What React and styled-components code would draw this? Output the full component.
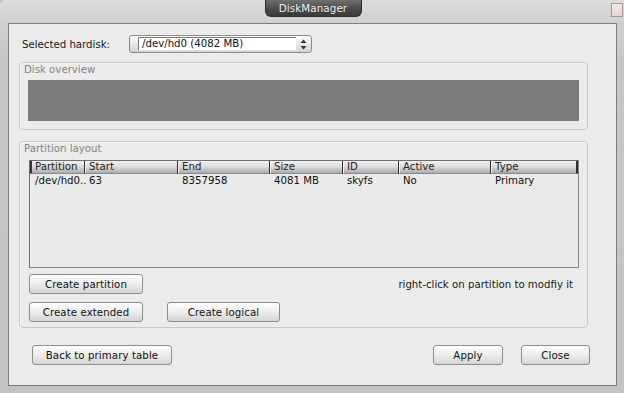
import React from "react";
import styled, { createGlobalStyle } from "styled-components";

const GlobalStyle = createGlobalStyle`
  html, body { margin: 0; padding: 0; }
  body {
    background: #c4c4c4;
    font-family: "DejaVu Sans", "Liberation Sans", sans-serif;
    font-size: 10.2px;
    color: #151515;
  }
`;

const Window = styled.div`
  width: 624px;
  height: 393px;
  display: flex;
  flex-direction: column;
  background: linear-gradient(#dcdcdc 0px, #d0d0d0 22px, #c6c6c6 60px, #c3c3c3);
  border-top-left-radius: 5px;
  overflow: hidden;
`;

const TitleBar = styled.div`
  height: 23px;
  flex: none;
  display: grid;
  grid-template-columns: 1fr 97px 1fr;
  padding: 0 1px 0 3px;
  align-items: start;
`;

const TitleTab = styled.div`
  grid-column: 2;
  height: 17px;
  box-sizing: border-box;
  background: linear-gradient(#707070, #4a4a4a 55%, #3a3a3a);
  border: 1px solid #2c2c2c;
  border-top: none;
  border-radius: 0 0 6px 6px;
  color: #ececec;
  font-size: 10.3px;
  display: flex;
  align-items: center;
  justify-content: center;
  padding-bottom: 1px;
  letter-spacing: 0.1px;
`;

const CloseBox = styled.div`
  grid-column: 3;
  justify-self: end;
  margin-top: 3px;
  width: 12px;
  height: 14px;
  box-sizing: border-box;
  border: 1px solid #a69393;
  background: linear-gradient(#f6e6e6, #e8d2d2);
`;

const Frame = styled.div`
  flex: 1;
  display: flex;
  padding: 0 7px 7px 8px;
  min-height: 0;
`;

const Panel = styled.div`
  flex: 1;
  display: flex;
  flex-direction: column;
  border: 1px solid #7e7e7e;
  background: #ebebeb;
`;

const HardiskRow = styled.div`
  display: flex;
  align-items: center;
  height: 18px;
  margin: 11px 0 0 13px;
`;

const Label = styled.div`
  width: 107px;
  color: #1a1a1a;
`;

const Select = styled.div`
  width: 183px;
  height: 18px;
  box-sizing: border-box;
  border: 1px solid #8c8c8c;
  border-radius: 3px;
  background: linear-gradient(#fdfdfd, #e6e6e6 55%, #d3d3d3);
  display: flex;
  align-items: center;
`;

const SelectField = styled.div`
  margin-left: 8px;
  width: 158px;
  height: 14px;
  box-sizing: border-box;
  background: #ffffff;
  border-top: 1px solid #7a7a7a;
  border-left: 1px solid #7a7a7a;
  border-bottom: 1px solid #e0e0e0;
  padding-left: 3px;
  line-height: 12px;
  color: #111;
  white-space: nowrap;
`;

const SelectArrow = styled.div`
  flex: 1;
  display: flex;
  align-items: center;
  justify-content: center;
`;

const Group = styled.div`
  margin: ${(p) => p.$top}px 28px 0 10px;
  border: 1px solid #c8c8c8;
  border-radius: 4px;
  box-shadow: inset 1px 1px 0 #f8f8f8;
  padding: 0 8px ${(p) => p.$bottom}px 9px;
  display: flex;
  flex-direction: column;
`;

const GroupLabel = styled.div`
  height: 13px;
  line-height: 13px;
  margin-left: -5px;
  margin-bottom: ${(p) => p.$gap}px;
  color: #858585;
`;

const OverviewBar = styled.div`
  height: 41px;
  margin-left: -1px;
  background: #7b7b7b;
`;

const Table = styled.div`
  height: 108px;
  box-sizing: border-box;
  border: 1px solid #8a8a8a;
  border-top-color: #6e6e6e;
  border-left-color: #6e6e6e;
  background: #eaeaea;
  display: grid;
  grid-template-columns: 54px 93px 92px 73px 56px 92px 88px;
  grid-auto-rows: 13px;
  align-content: start;
`;

const HeadCell = styled.div`
  box-sizing: border-box;
  height: 13px;
  line-height: 12px;
  padding-left: 4px;
  background: linear-gradient(#f2f2f2, #d9d9d9 50%, #acacac);
  border-left: 1px solid #2e2e2e;
  border-bottom: 1px solid #8a8a8a;
  border-right: ${(p) => (p.$last ? "2px solid #2e2e2e" : "none")};
  box-shadow: ${(p) => (p.$first ? "inset 1px 0 0 #3a3a3a" : "inset 1px 0 0 #f4f4f4")};
  color: #222;
  white-space: nowrap;
  overflow: hidden;
`;

const Cell = styled.div`
  line-height: 13px;
  padding-left: 5px;
  color: #111;
  white-space: nowrap;
  overflow: visible;
`;

const ButtonRow = styled.div`
  display: flex;
  align-items: center;
  gap: 24px;
  margin-top: ${(p) => p.$top}px;
`;

const Hint = styled.div`
  margin-left: auto;
  margin-right: 6px;
  color: #1a1a1a;
`;

const Button = styled.button`
  width: ${(p) => p.$w}px;
  height: 20px;
  box-sizing: border-box;
  padding: 0;
  border: 1px solid #8e8e8e;
  border-radius: 3px;
  background: linear-gradient(#fefefe, #ececec 50%, #d4d4d4);
  font-family: inherit;
  font-size: 10.2px;
  color: #111;
  letter-spacing: 0.1px;
`;

const BottomRow = styled.div`
  display: flex;
  align-items: center;
  margin: 17px 26px 0 23px;
`;

const RightButtons = styled.div`
  margin-left: auto;
  display: flex;
  gap: 18px;
`;

const columns = ["Partition", "Start", "End", "Size", "ID", "Active", "Type"];
const rows = [["/dev/hd0..", "63", "8357958", "4081 MB", "skyfs", "No", "Primary"]];

function UpDown() {
  return (
    <svg width="7" height="11" viewBox="0 0 7 11">
      <path d="M3.5 0.5 L6.5 4 L0.5 4 Z" fill="#333" />
      <path d="M3.5 10.5 L6.5 7 L0.5 7 Z" fill="#333" />
    </svg>
  );
}

export default function App() {
  return (
    <>
      <GlobalStyle />
      <Window>
        <TitleBar>
          <TitleTab>DiskManager</TitleTab>
          <CloseBox />
        </TitleBar>
        <Frame>
          <Panel>
            <HardiskRow>
              <Label>Selected hardisk:</Label>
              <Select>
                <SelectField>/dev/hd0 (4082 MB)</SelectField>
                <SelectArrow>
                  <UpDown />
                </SelectArrow>
              </Select>
            </HardiskRow>

            <Group $top={9} $bottom={8}>
              <GroupLabel $gap={4}>Disk overview</GroupLabel>
              <OverviewBar />
            </Group>

            <Group $top={11} $bottom={5}>
              <GroupLabel $gap={5}>Partition layout</GroupLabel>
              <Table>
                {columns.map((c, i) => (
                  <HeadCell key={c} $first={i === 0} $last={i === columns.length - 1}>
                    {c}
                  </HeadCell>
                ))}
                {rows.map((r) => r.map((v, i) => <Cell key={i}>{v}</Cell>))}
              </Table>
              <ButtonRow $top={6}>
                <Button $w={114}>Create partition</Button>
                <Hint>right-click on partition to modfiy it</Hint>
              </ButtonRow>
              <ButtonRow $top={8}>
                <Button $w={114}>Create extended</Button>
                <Button $w={113}>Create logical</Button>
              </ButtonRow>
            </Group>

            <BottomRow>
              <Button $w={140}>Back to primary table</Button>
              <RightButtons>
                <Button $w={70}>Apply</Button>
                <Button $w={69}>Close</Button>
              </RightButtons>
            </BottomRow>
          </Panel>
        </Frame>
      </Window>
    </>
  );
}
